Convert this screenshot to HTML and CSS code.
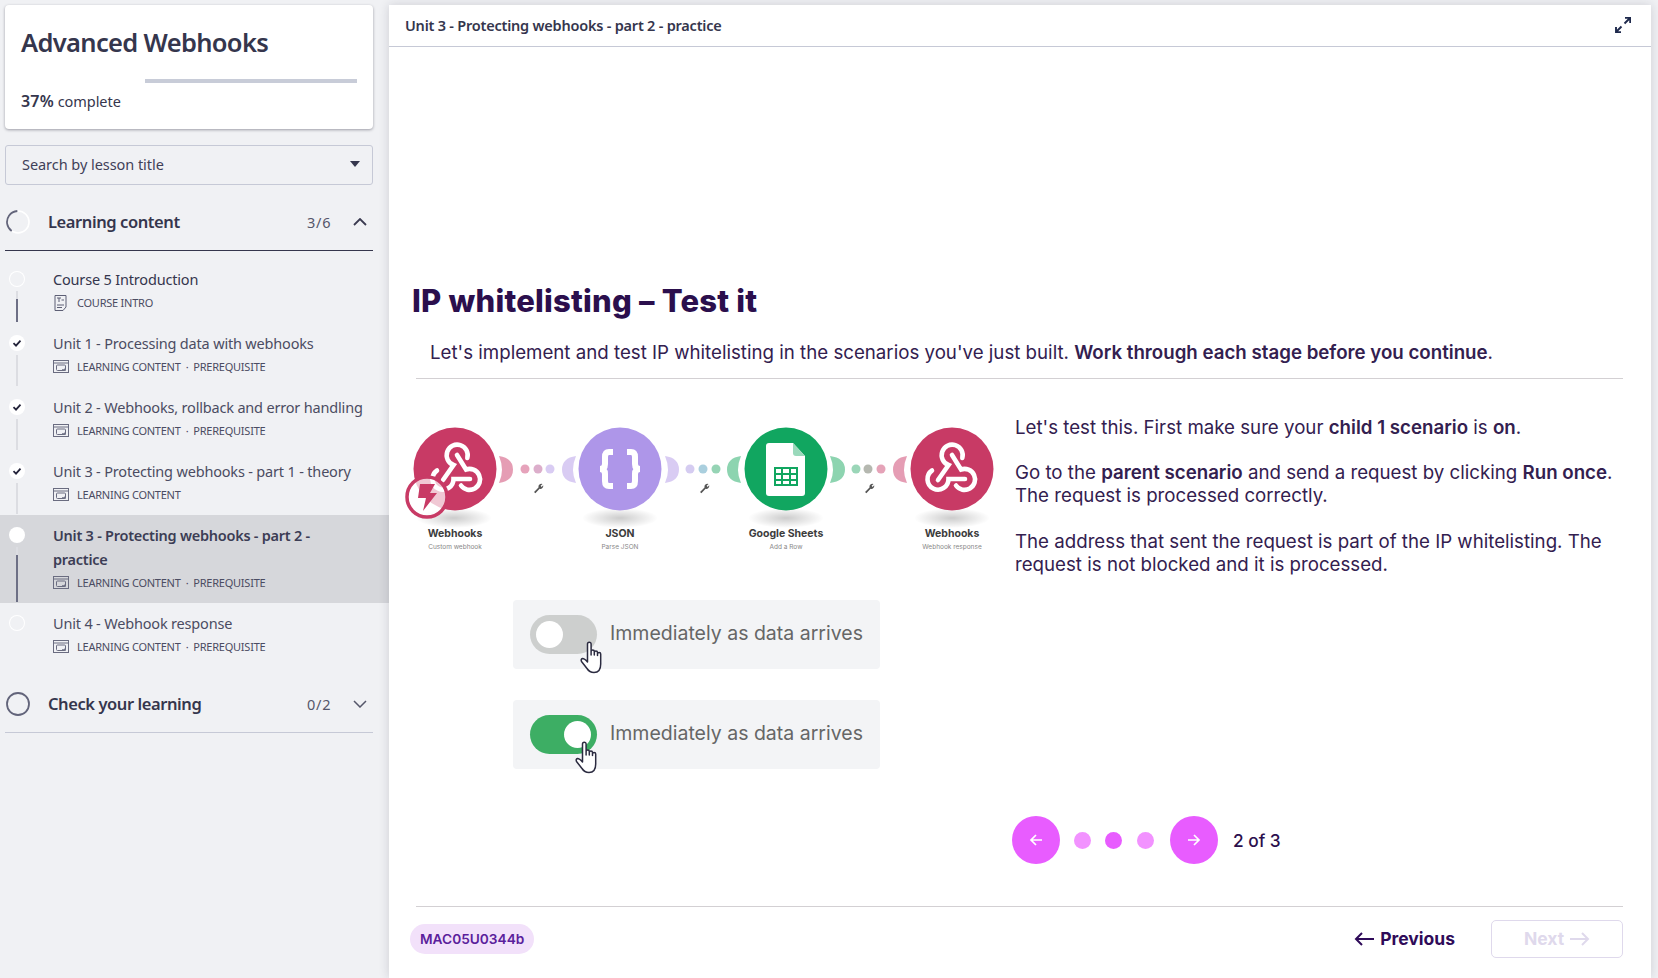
FILE: index.html
```html
<!DOCTYPE html>
<html lang="en">
  <head>
    <meta charset="UTF-8" />
    <title>Advanced Webhooks</title>
    <link rel="stylesheet" href="styles.css">
  </head>
  <body>
    <svg class="defs" width="0" height="0">
      <symbol id="lesson" viewBox="0 0 16 13">
        <rect x="0.5" y="0.5" width="15" height="12" fill="none" stroke="currentColor" />
        <path d="M0.5 3H15.5" stroke="currentColor" fill="none" />
        <rect x="3.5" y="5" width="9" height="5.5" rx="1" fill="none" stroke="currentColor" />
        <path d="M9 10H12V8.5" stroke="currentColor" stroke-width="1.4" fill="none" />
      </symbol>
      <symbol id="hand" viewBox="0 0 24 33">
        <path d="M7.5 3a1.8 1.8 0 0 1 3.6 0V14V10.5a1.6 1.6 0 0 1 3.2 0V14V11.5a1.6 1.6 0 0 1 3.2 0V14.5V13a1.6 1.6 0 0 1 3.2 0V23Q20.7 31.5 14 31.5Q9.5 31.5 7 27.5L1.5 20.5Q0.5 18 2.5 17.5Q4.5 17.5 7.5 21Z" fill="#fff" stroke="#2b2b40" stroke-width="1.5" stroke-linejoin="round" />
      </symbol>
      <symbol id="check" viewBox="0 0 16 16">
        <path d="M4.5 8.2L7 10.6L11.5 5.6" fill="none" stroke="#23233a" stroke-width="1.8" />
      </symbol>
      <g id="webhook" fill="none" stroke="#fff" stroke-width="4.6" stroke-linecap="round">
        <path d="M-14 12L-3.5 -3A10.500 10.500 0 1 1 10.300 -10" />
        <path d="M0 -13L9 1.500A10.500 10.500 0 1 1 4 17.500" />
        <path d="M13 11H-3.500A10.500 10.500 0 1 1 -20 2.500" />
      </g>
      <path id="wrench" d="M-4 4L0.5 -0.5A3 3 0 0 1 4.5 -4L2.6 -2.2L3.6 -1L5.2 -2.8A3 3 0 0 1 1.6 0.8L-2.6 5.2Z" fill="#555" />
      <radialGradient id="drop">
        <stop offset="0" stop-color="#000" stop-opacity=".2" />
        <stop offset="1" stop-color="#000" stop-opacity="0" />
      </radialGradient>
    </svg>

    <div class="app">
      <aside class="sidebar">
        <div class="course-card">
          <h1 class="course-card__title">Advanced Webhooks</h1>
          <div class="progress"><div class="progress__fill"></div></div>
          <div class="course-card__status"><b>37%</b> complete</div>
        </div>

        <div class="search">
          <span>Search by lesson title</span>
          <span class="search__caret"></span>
        </div>

        <div class="section section--open">
          <svg class="section__ring" viewBox="0 0 24 24">
            <circle cx="12" cy="12" r="11" fill="none" stroke="#fff" stroke-width="1.6" />
            <circle cx="12" cy="12" r="11" fill="none" stroke="#62647a" stroke-width="1.8" stroke-dasharray="27 100" transform="rotate(125 12 12)" />
          </svg>
          <span class="section__title">Learning content</span>
          <span class="section__count">3/6</span>
          <svg class="section__chevron" viewBox="0 0 14 8"><path d="M1 7L7 1L13 7" fill="none" stroke="#3a3a50" stroke-width="1.8" /></svg>
        </div>

        <ul class="lessons">
          <li class="lesson">
            <div class="rail">
              <span class="rail__dot rail__dot--empty"></span>
              <span class="rail__line rail__line--active"></span>
            </div>
            <div class="lesson__body">
              <div class="lesson__title lesson__title--dark">Course 5 Introduction</div>
              <div class="lesson__meta">
                <svg class="lesson__doc" viewBox="0 0 13 16">
                  <path d="M1 .5H12V12L9 15.5H1Z" fill="none" stroke="#5d5f75" />
                  <path d="M3 3H7M5 3V7M7.5 5H10M3 10H10M3 12.5H8" fill="none" stroke="#5d5f75" />
                </svg>
                <span>COURSE INTRO</span>
              </div>
            </div>
          </li>
          <li class="lesson">
            <div class="rail">
              <span class="rail__dot"><svg class="rail__check"><use href="#check" /></svg></span>
              <span class="rail__line"></span>
            </div>
            <div class="lesson__body">
              <div class="lesson__title">Unit 1 - Processing data with webhooks</div>
              <div class="lesson__meta"><svg class="lesson__icon"><use href="#lesson" /></svg><span>LEARNING CONTENT</span><span class="lesson__sep">·</span><span>PREREQUISITE</span></div>
            </div>
          </li>
          <li class="lesson">
            <div class="rail">
              <span class="rail__dot"><svg class="rail__check"><use href="#check" /></svg></span>
              <span class="rail__line"></span>
            </div>
            <div class="lesson__body">
              <div class="lesson__title">Unit 2 - Webhooks, rollback and error handling</div>
              <div class="lesson__meta"><svg class="lesson__icon"><use href="#lesson" /></svg><span>LEARNING CONTENT</span><span class="lesson__sep">·</span><span>PREREQUISITE</span></div>
            </div>
          </li>
          <li class="lesson">
            <div class="rail">
              <span class="rail__dot"><svg class="rail__check"><use href="#check" /></svg></span>
              <span class="rail__line"></span>
            </div>
            <div class="lesson__body">
              <div class="lesson__title">Unit 3 - Protecting webhooks - part 1 - theory</div>
              <div class="lesson__meta"><svg class="lesson__icon"><use href="#lesson" /></svg><span>LEARNING CONTENT</span></div>
            </div>
          </li>
          <li class="lesson lesson--current">
            <div class="rail">
              <span class="rail__dot"></span>
              <span class="rail__line rail__line--active"></span>
            </div>
            <div class="lesson__body">
              <div class="lesson__title">Unit 3 - Protecting webhooks - part 2 - practice</div>
              <div class="lesson__meta"><svg class="lesson__icon"><use href="#lesson" /></svg><span>LEARNING CONTENT</span><span class="lesson__sep">·</span><span>PREREQUISITE</span></div>
            </div>
          </li>
          <li class="lesson lesson--last">
            <div class="rail">
              <span class="rail__dot rail__dot--empty"></span>
            </div>
            <div class="lesson__body">
              <div class="lesson__title">Unit 4 - Webhook response</div>
              <div class="lesson__meta"><svg class="lesson__icon"><use href="#lesson" /></svg><span>LEARNING CONTENT</span><span class="lesson__sep">·</span><span>PREREQUISITE</span></div>
            </div>
          </li>
        </ul>

        <div class="section">
          <svg class="section__ring" viewBox="0 0 24 24">
            <circle cx="12" cy="12" r="11" fill="none" stroke="#62647a" stroke-width="1.8" />
          </svg>
          <span class="section__title">Check your learning</span>
          <span class="section__count">0/2</span>
          <svg class="section__chevron" viewBox="0 0 14 8"><path d="M1 1L7 7L13 1" fill="none" stroke="#55566a" stroke-width="1.5" /></svg>
        </div>
      </aside>

      <main class="lesson-view">
        <header class="topbar">
          <span class="topbar__title">Unit 3 - Protecting webhooks - part 2 - practice</span>
          <svg class="topbar__expand" viewBox="0 0 16 16">
            <path d="M9.5 6.5L15 1M10 .8H15.2V6M6.5 9.5L1 15M1 10V15.2H6" fill="none" stroke="#1f2a4d" stroke-width="1.9" />
          </svg>
        </header>

        <div class="stage">
          <h2 class="stage__title">IP whitelisting – Test it</h2>
          <p class="stage__intro">Let's implement and test IP whitelisting in the scenarios you've just built. <b>Work through each stage before you continue</b>.</p>

          <div class="slide">
            <div class="slide__media">
              <svg class="flow" viewBox="400 410 600 150">
                <ellipse cx="454" cy="518" rx="38" ry="10" fill="url(#drop)" />
                <ellipse cx="620" cy="518" rx="38" ry="10" fill="url(#drop)" />
                <ellipse cx="786" cy="518" rx="38" ry="10" fill="url(#drop)" />
                <ellipse cx="952" cy="518" rx="38" ry="10" fill="url(#drop)" />

                <path d="M499 456Q513 458 513 469.500Q513 481 499 483Q505 470 499 456Z" fill="#e59db4" />
                <circle cx="525" cy="469" r="4.500" fill="#e6a3bb" />
                <circle cx="538" cy="469" r="4.500" fill="#dcaecb" />
                <circle cx="550" cy="469" r="4.500" fill="#d9ccf3" />
                <path d="M576 456Q562 458 562 469.500Q562 481 576 483Q570 470 576 456Z" fill="#d9ccf3" />

                <path d="M665 456Q679 458 679 469.500Q679 481 665 483Q671 470 665 456Z" fill="#d9ccf3" />
                <circle cx="690" cy="469" r="4.500" fill="#d5ccf1" />
                <circle cx="703" cy="469" r="4.500" fill="#aacfde" />
                <circle cx="716" cy="469" r="4.500" fill="#96d4b5" />
                <path d="M741 456Q727 458 727 469.500Q727 481 741 483Q735 470 741 456Z" fill="#8dd4b0" />

                <path d="M830 456Q845 458 845 469.500Q845 481 830 483Q836 470 830 456Z" fill="#8dd4b0" />
                <circle cx="856" cy="469" r="4.500" fill="#9bd6b8" />
                <circle cx="868" cy="469" r="4.500" fill="#b5b8b0" />
                <circle cx="881" cy="469" r="4.500" fill="#e5a3b8" />
                <path d="M907 456Q893 458 893 469.500Q893 481 907 483Q901 470 907 456Z" fill="#e59db4" />

                <use href="#wrench" x="538" y="488" />
                <use href="#wrench" x="704" y="488" />
                <use href="#wrench" x="869" y="488" />

                <circle cx="455" cy="469" r="41.500" fill="#c83a65" />
                <use href="#webhook" x="457" y="468" />

                <circle cx="620" cy="469" r="41.500" fill="#ae96e9" />
                <g fill="none" stroke="#fff" stroke-width="6">
                  <path d="M613 452H609Q605 452 605 457V464Q605 469 600 469Q605 469 605 474V481Q605 486 609 486H613" />
                  <path d="M627 452H631Q635 452 635 457V464Q635 469 640 469Q635 469 635 474V481Q635 486 631 486H627" />
                </g>

                <circle cx="786" cy="469" r="41.500" fill="#11a660" />
                <path d="M769 443H793L805 456V493Q805 496 802 496H769Q766 496 766 493V446Q766 443 769 443Z" fill="#fff" />
                <path d="M793 443L805 456H796Q793 456 793 453Z" fill="#9ad9bb" />
                <g fill="none" stroke="#11a660" stroke-width="2">
                  <rect x="775" y="468" width="22" height="17" />
                  <path d="M775 474H797M775 480H797M782 468V485M790 468V485" />
                </g>

                <circle cx="952" cy="469" r="41.500" fill="#c83a65" />
                <use href="#webhook" x="952" y="468" />

                <circle cx="427" cy="497" r="20" fill="#fff" fill-opacity=".72" stroke="#c83a65" stroke-width="3.500" />
                <path d="M420 484H435L430 493H437L423 511L426 498H418Z" fill="#c83a65" />

                <g class="flow__name">
                  <text x="455" y="537">Webhooks</text>
                  <text x="620" y="537">JSON</text>
                  <text x="786" y="537">Google Sheets</text>
                  <text x="952" y="537">Webhooks</text>
                </g>
                <g class="flow__sub">
                  <text x="455" y="549">Custom webhook</text>
                  <text x="620" y="549">Parse JSON</text>
                  <text x="786" y="549">Add a Row</text>
                  <text x="952" y="549">Webhook response</text>
                </g>
              </svg>

              <div class="toggle-card">
                <span class="toggle"></span>
                <span class="toggle-card__label">Immediately as data arrives</span>
                <svg class="toggle-card__hand"><use href="#hand" /></svg>
              </div>
              <div class="toggle-card toggle-card--on">
                <span class="toggle toggle--on"></span>
                <span class="toggle-card__label">Immediately as data arrives</span>
                <svg class="toggle-card__hand"><use href="#hand" /></svg>
              </div>
            </div>

            <div class="slide__copy">
              <p>Let's test this. First make sure your <b>child 1 scenario</b> is <b>on</b>.</p>
              <p>Go to the <b>parent scenario</b> and send a request by clicking <b>Run once</b>. The request is processed correctly.</p>
              <p>The address that sent the request is part of the IP whitelisting. The request is not blocked and it is processed.</p>
              <div class="pager">
                <span class="pager__btn">
                  <svg viewBox="0 0 14 14"><path d="M13 7H2M7 2L2 7L7 12" fill="none" stroke="#fff" stroke-width="1.700" /></svg>
                </span>
                <span class="pager__dot"></span>
                <span class="pager__dot pager__dot--on"></span>
                <span class="pager__dot"></span>
                <span class="pager__btn">
                  <svg viewBox="0 0 14 14"><path d="M1 7H12M7 2L12 7L7 12" fill="none" stroke="#fff" stroke-width="1.700" /></svg>
                </span>
                <span class="pager__label">2 of 3</span>
              </div>
            </div>
          </div>
        </div>

        <footer class="foot">
          <span class="foot__tag">MAC05U0344b</span>
          <span class="foot__prev">
            <svg viewBox="0 0 20 14"><path d="M20 7H2M8 1L2 7L8 13" fill="none" stroke="currentColor" stroke-width="2" /></svg>
            Previous
          </span>
          <span class="foot__next">
            Next
            <svg viewBox="0 0 20 14"><path d="M0 7H18M12 1L18 7L12 13" fill="none" stroke="currentColor" stroke-width="2" /></svg>
          </span>
        </footer>
      </main>
    </div>
  </body>
</html>
```

FILE: styles.css
```css
html,
body {
  margin: 0;
  height: 100%;
  overflow: hidden;
  background: #f0f1f4;
}

body {
  font-family: "Noto Sans", Arial, sans-serif;
  color: #35364d;
}

.defs {
  position: absolute;
}

.app {
  display: flex;
  height: 978px;
}

/* sidebar */
.sidebar {
  width: 389px;
  flex: none;
  padding-top: 5px;
  box-sizing: border-box;
}

.course-card {
  margin: 0 16px 0 5px;
  height: 124px;
  box-sizing: border-box;
  padding: 21px 16px 0;
  background: #fff;
  border-radius: 4px;
  box-shadow: 0 1px 3px rgba(30, 30, 50, 0.4);
}

.course-card__title {
  margin: 0;
  font-size: 25.500px;
  line-height: 32px;
  font-weight: 600;
  letter-spacing: -0.67px;
}

.progress {
  margin-top: 21px;
  height: 4px;
  background: #c8ccd8;
}

.progress__fill {
  width: 37%;
  height: 100%;
  background: #fff;
}

.course-card__status {
  margin-top: 7px;
  font-size: 14.500px;
  line-height: 22px;
  letter-spacing: -0.05px;
}

.course-card__status b {
  font-size: 16px;
  font-weight: 600;
  letter-spacing: 0.2px;
}

.search {
  margin: 16px 16px 0 5px;
  height: 40px;
  box-sizing: border-box;
  padding: 0 12px 2px 16px;
  display: flex;
  align-items: center;
  justify-content: space-between;
  border: 1px solid #c6c9d6;
  border-radius: 3px;
  font-size: 14.500px;
  letter-spacing: -0.05px;
  color: #3f4058;
}

.search__caret {
  width: 0;
  height: 0;
  border-left: 5px solid transparent;
  border-right: 5px solid transparent;
  border-top: 6px solid #35364d;
}

.section {
  margin: 9px 16px 0 5px;
  height: 57px;
  box-sizing: border-box;
  display: flex;
  align-items: center;
  border-bottom: 1px solid #c6c9d6;
}

.section--open {
  border-bottom-color: #35364d;
}

.section__ring {
  width: 24px;
  height: 24px;
  margin-left: 1px;
}

.section__title {
  margin-left: 18px;
  margin-bottom: 2px;
  font-size: 16.500px;
  font-weight: 600;
  letter-spacing: -0.42px;
  flex: 1;
}

.section__count {
  font-size: 14.500px;
  letter-spacing: 0.8px;
  color: #55566a;
  width: 46px;
}

.section__chevron {
  width: 14px;
  height: 8px;
  margin-right: 6px;
}

/* lessons */
.lessons {
  list-style: none;
  margin: 8px 0 0;
  padding: 0;
}

.lesson {
  display: flex;
  padding: 8px 16px 9px 9px;
}

.lesson--current {
  background: #d6d7db;
}

.lesson__body {
  margin-left: 28px;
  min-width: 0;
  max-width: 312px;
}

.lesson__title {
  font-size: 14.500px;
  line-height: 24px;
  letter-spacing: -0.18px;
  color: #4b4c62;
}

.lesson__title--dark {
  color: #35364d;
}

.lesson--current .lesson__title {
  font-weight: 600;
  letter-spacing: -0.25px;
  color: #3c3d55;
}

.lesson__meta {
  display: flex;
  align-items: center;
  height: 23px;
  font-size: 11px;
  letter-spacing: -0.24px;
  color: #4b4c62;
}

.lesson__icon {
  width: 16px;
  height: 13px;
  margin-right: 8px;
  color: #6a6c80;
}

.lesson__doc {
  width: 13px;
  height: 16px;
  margin: 0 10px 0 1px;
}

.lesson__sep {
  margin: 0 5px;
}

.rail {
  width: 16px;
  flex: none;
  display: flex;
  flex-direction: column;
  align-items: center;
  margin: 4px 0 -12px;
  position: relative;
  z-index: 1;
}

.rail__dot {
  width: 16px;
  height: 16px;
  flex: none;
  border-radius: 50%;
  background: #fff;
}

.rail__dot--empty {
  background: none;
  box-shadow: inset 0 0 0 1px #fff;
}

.rail__check {
  display: block;
  width: 16px;
  height: 16px;
}

.rail__line {
  flex: 1;
  width: 2px;
  margin: 4px 0;
  background: #dcdde2;
}

.rail__line--active {
  background: linear-gradient(#dcdde2 8px, #6d6f85 8px);
}

.lesson--last .rail {
  margin-bottom: 0;
}

/* lesson view */
.lesson-view {
  flex: 1;
  margin: 5px 7px 0 0;
  display: flex;
  flex-direction: column;
  background: #fff;
  box-shadow: 0 0 10px rgba(30, 30, 50, 0.16);
}

.topbar {
  height: 42px;
  flex: none;
  box-sizing: border-box;
  display: flex;
  align-items: center;
  justify-content: space-between;
  padding: 0 20px 2px 16px;
  border-bottom: 1px solid #c6c9d6;
}

.topbar__title {
  font-size: 14.500px;
  font-weight: 600;
  letter-spacing: -0.22px;
  color: #35364d;
}

.topbar__expand {
  width: 16px;
  height: 16px;
}

.stage {
  flex: 1;
  min-height: 0;
  display: flex;
  flex-direction: column;
  padding: 235px 28px 0 11px;
  color: #33204f;
  font-family: Inter, "Noto Sans", sans-serif;
}

.stage__title {
  margin: 0 0 0 12px;
  font-size: 31px;
  line-height: 38px;
  font-weight: 800;
  letter-spacing: 0.22px;
  color: #2b0f4d;
}

.stage__intro {
  margin: 21px 0 0 16px;
  padding: 0 0 14px 14px;
  font-size: 18.700px;
  line-height: 23px;
  border-bottom: 1px solid #d3d0d3;
}

.stage__intro b,
.slide__copy b {
  font-weight: 600;
}

.slide {
  flex: 1;
  display: grid;
  grid-template-columns: 615px 1fr;
  margin-top: 31px;
}

.flow {
  display: block;
  width: 600px;
  height: 150px;
}

.flow text {
  text-anchor: middle;
}

.flow__name {
  font-size: 10.500px;
  font-weight: 700;
  fill: #3c3c3c;
}

.flow__sub {
  font-size: 6.500px;
  fill: #888;
}

.toggle-card {
  position: relative;
  width: 367px;
  height: 69px;
  box-sizing: border-box;
  margin: 40px 0 0 113px;
  padding-left: 17px;
  display: flex;
  align-items: center;
  gap: 13px;
  background: #f3f4f6;
  border-radius: 4px;
  font-size: 19.500px;
  color: #666;
}

.toggle-card__label {
  margin-bottom: 4px;
}

.toggle-card--on {
  margin-top: 31px;
}

.toggle {
  width: 67px;
  height: 39px;
  flex: none;
  border-radius: 20px;
  background: #cdcfce;
  display: flex;
  align-items: center;
  padding-left: 6px;
  box-sizing: border-box;
}

.toggle::after {
  content: "";
  width: 27px;
  height: 27px;
  border-radius: 50%;
  background: #fff;
}

.toggle--on {
  background: #3dae64;
  justify-content: flex-end;
  padding: 0 6px 0 0;
}

.toggle-card__hand {
  position: absolute;
  left: 67px;
  top: 41px;
  width: 24px;
  height: 33px;
}

.toggle-card--on .toggle-card__hand {
  left: 62px;
}

.slide__copy {
  font-size: 18.700px;
  line-height: 23px;
  padding: 6px 0 42px;
  display: flex;
  flex-direction: column;
}

.slide__copy p {
  margin: 0 0 22px;
}

.slide__copy p:nth-child(2) {
  margin-bottom: 23px;
}

.pager {
  display: flex;
  align-items: center;
  margin: auto 0 0 -3px;
  height: 48px;
}

.pager__btn {
  width: 48px;
  height: 48px;
  border-radius: 50%;
  background: #e85cff;
  display: flex;
  align-items: center;
  justify-content: center;
}

.pager__btn svg {
  width: 14px;
  height: 14px;
}

.pager__dot {
  width: 17px;
  height: 17px;
  margin: 0 7px;
  border-radius: 50%;
  background: #f292ff;
}

.pager__dot:nth-child(2) {
  margin-left: 14px;
}

.pager__dot:nth-child(4) {
  margin-left: 8px;
  margin-right: 16px;
}

.pager__dot--on {
  background: #e85cff;
}

.pager__label {
  margin-left: 15px;
  font-size: 17.300px;
  font-weight: 500;
  color: #2b0f4d;
}

.foot {
  margin: 0 28px 0 27px;
  height: 72px;
  flex: none;
  box-sizing: border-box;
  padding-bottom: 8px;
  border-top: 1px solid #d3d0d3;
  display: flex;
  align-items: center;
  font-family: Inter, "Noto Sans", sans-serif;
  font-size: 17.500px;
  font-weight: 700;
}

.foot__tag {
  margin-left: -6px;
  padding: 0 10px;
  height: 30px;
  line-height: 30px;
  border-radius: 15px;
  background: #f2e1fa;
  color: #5b1f9c;
  font-size: 13.700px;
  font-weight: 600;
  margin-right: auto;
}

.foot__prev {
  display: flex;
  align-items: center;
  gap: 6px;
  color: #2f0b59;
  margin-right: 36px;
}

.foot__prev svg,
.foot__next svg {
  width: 20px;
  height: 14px;
}

.foot__next {
  width: 132px;
  height: 38px;
  box-sizing: border-box;
  display: flex;
  align-items: center;
  justify-content: center;
  gap: 6px;
  color: #dfd9ec;
  border: 1.500px solid #dfd9ec;
  border-radius: 5px;
}
```
